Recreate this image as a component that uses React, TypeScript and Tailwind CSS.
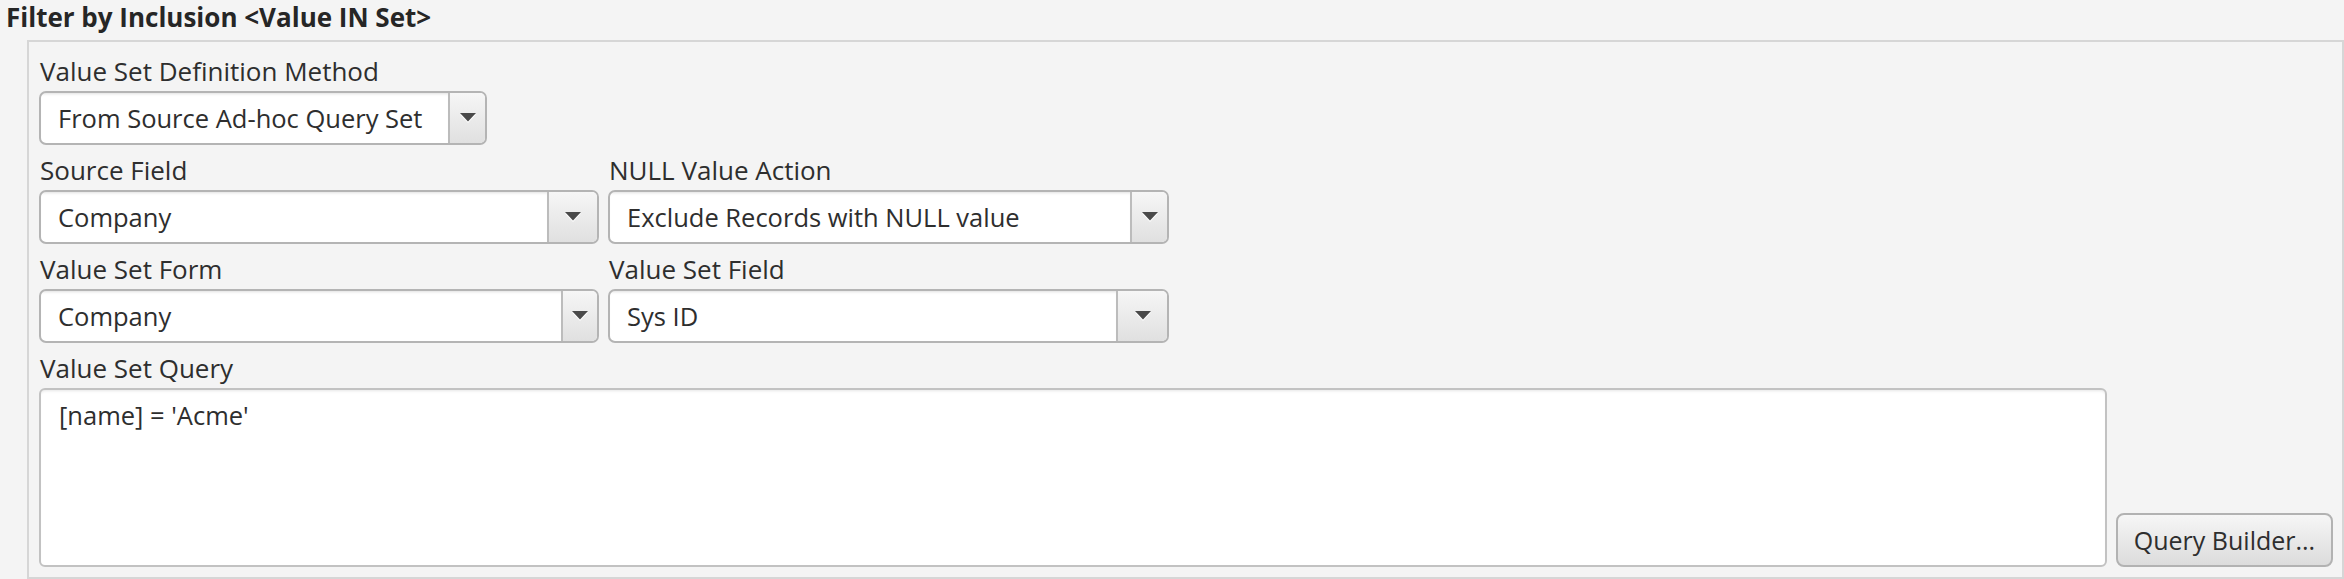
import React from 'react';

const font = { fontFamily: '"Open Sans", "Noto Sans", sans-serif' };

const Arrow = () => (
    <svg width="16" height="10" viewBox="0 0 16 10">
        <polygon points="0,1.5 16,1.5 8,10" fill="#ffffff"/>
        <polygon points="0,0 16,0 8,8.5" fill="#4a4a4a"/>
    </svg>
);

type ComboProps = {
    value: string;
    width: string;
    arrow: string;
};

const Combo = ( { value, width, arrow }: ComboProps ) => (
    <div className={ `flex h-[54px] overflow-hidden rounded-[7px] border-2 border-[#b4b4b4] bg-white ${ width }` }>
        <div className="flex flex-1 items-center pl-[17px] text-[25.5px] leading-[32px] text-[#2e2e2e] shadow-[inset_0_3px_3px_-2px_rgba(0,0,0,0.12)]">
            { value }
        </div>
        <div className={ `flex items-center justify-center border-l-2 border-[#bcbcbc] bg-linear-to-b from-[#f6f6f6] to-[#e0e0e0] ${ arrow }` }>
            <Arrow/>
        </div>
    </div>
);

const Label = ( { children }: { children: React.ReactNode } ) => (
    <div className="mb-[4px] pl-px text-[26px] leading-[32px] text-[#2e2e2e]">{ children }</div>
);

export default function App() {
    return (
        <div className="flex h-[579px] w-[2344px] flex-col bg-[#f4f4f4]" style={ font }>

            <div className="h-[40px] pl-[6px] pt-[1px] text-[26px] font-bold leading-[32px] text-[#262626]">
                Filter by Inclusion &lt;Value IN Set&gt;
            </div>

            <div className="ml-[27px] flex flex-1 flex-col border-2 border-[#d6d6d6] pb-[10px] pl-[10px] pr-[9px] pt-[13px]">

                <Label>Value Set Definition Method</Label>
                <Combo value="From Source Ad-hoc Query Set" width="w-[448px]" arrow="w-[37px]"/>

                <div className="mt-[9px] flex gap-[9px]">
                    <div className="flex flex-col">
                        <Label>Source Field</Label>
                        <Combo value="Company" width="w-[560px]" arrow="w-[50px]"/>
                    </div>
                    <div className="flex flex-col">
                        <Label>NULL Value Action</Label>
                        <Combo value="Exclude Records with NULL value" width="w-[561px]" arrow="w-[37px]"/>
                    </div>
                </div>

                <div className="mt-[9px] flex gap-[9px]">
                    <div className="flex flex-col">
                        <Label>Value Set Form</Label>
                        <Combo value="Company" width="w-[560px]" arrow="w-[36px]"/>
                    </div>
                    <div className="flex flex-col">
                        <Label>Value Set Field</Label>
                        <Combo value="Sys ID" width="w-[561px]" arrow="w-[51px]"/>
                    </div>
                </div>

                <div className="mt-[9px]">
                    <Label>Value Set Query</Label>
                </div>

                <div className="flex flex-1 items-end gap-[9px]">
                    <div className="h-full flex-1 rounded-[6px] border-2 border-[#c2c2c2] bg-white pl-[18px] pt-[9px] text-[25.5px] leading-[32px] text-[#2e2e2e] shadow-[inset_0_3px_3px_-2px_rgba(0,0,0,0.1)]">
                        [name] = 'Acme'
                    </div>
                    <button className="h-[54px] w-[217px] rounded-[8px] border-2 border-[#b2b2b2] bg-linear-to-b from-[#f6f6f6] to-[#dcdcdc] text-[25px] leading-[32px] text-[#2e2e2e]">
                        Query Builder...
                    </button>
                </div>

            </div>
        </div>
    );
}
